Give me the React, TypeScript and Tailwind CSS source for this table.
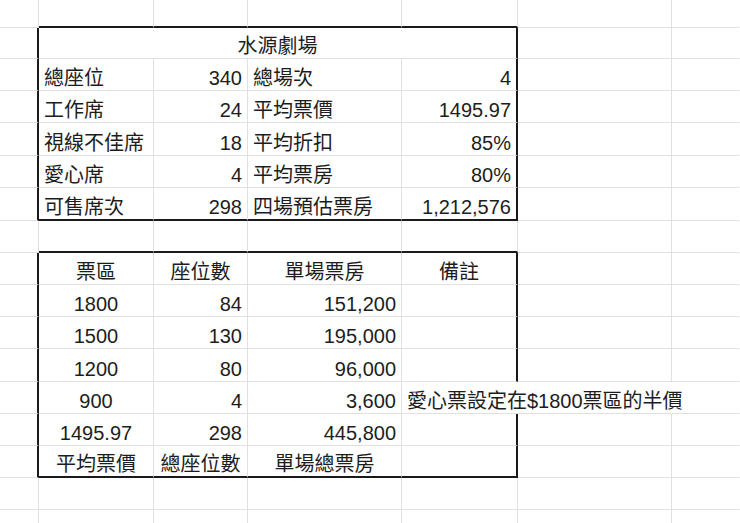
import clsx from 'clsx'

type Line = 'g' | 'k' | 'n'
type Align = 'l' | 'c' | 'r'

interface CellDef {
  t?: string
  a?: Align
  w: string
  r?: Line
  b?: Line
  spill?: boolean
}

interface RowDef {
  h: string
  cells: CellDef[]
}

const RIGHT: Record<Line, string> = {
  g: 'border-r border-r-[#e0e0e0]',
  k: 'border-r-2 border-r-[#1a1a1a]',
  n: 'border-r border-r-transparent',
}

const BOTTOM: Record<Line, string> = {
  g: 'border-b border-b-[#e0e0e0]',
  k: 'border-b-2 border-b-[#1a1a1a]',
  n: 'border-b border-b-transparent',
}

const ALIGN: Record<Align, string> = {
  l: 'justify-start',
  c: 'justify-center',
  r: 'justify-end',
}

// sheet columns A..G
const W = ['w-[39px]', 'w-[115px]', 'w-[94px]', 'w-[154px]', 'w-[116px]', 'w-[154px]', 'flex-1']

type Spec = [string, Align] | null

// one sheet row; `inner` fills columns B..E
function row(
  h: string,
  inner: Spec[],
  opts: { inTable?: boolean; bottom?: Line; spill?: boolean } = {},
): RowDef {
  const { inTable = false, bottom = 'g', spill = false } = opts
  const cells: CellDef[] = [{ w: W[0], r: inTable ? 'k' : 'g' }]
  inner.forEach((s, i) => {
    const last = i === 3
    cells.push({
      w: W[i + 1],
      t: s?.[0],
      a: s?.[1],
      r: last ? (spill ? 'n' : inTable ? 'k' : 'g') : 'g',
      b: bottom,
      spill: last && spill,
    })
  })
  cells.push({ w: W[5], r: spill ? 'n' : 'g' })
  cells.push({ w: W[6], r: 'n' })
  return { h, cells }
}

const empty: Spec[] = [null, null, null, null]

const ROWS: RowDef[] = [
  row('h-[28px]', empty, { bottom: 'k' }),
  {
    h: 'h-[31px]',
    cells: [
      { w: W[0], r: 'k' },
      { w: 'w-[479px]', t: '水源劇場', a: 'c', r: 'k' },
      { w: W[5] },
      { w: W[6], r: 'n' },
    ],
  },
  row('h-[32px]', [['總座位', 'l'], ['340', 'r'], ['總場次', 'l'], ['4', 'r']], { inTable: true }),
  row('h-[32px]', [['工作席', 'l'], ['24', 'r'], ['平均票價', 'l'], ['1495.97', 'r']], { inTable: true }),
  row('h-[33px]', [['視線不佳席', 'l'], ['18', 'r'], ['平均折扣', 'l'], ['85%', 'r']], { inTable: true }),
  row('h-[32px]', [['愛心席', 'l'], ['4', 'r'], ['平均票房', 'l'], ['80%', 'r']], { inTable: true }),
  row('h-[33px]', [['可售席次', 'l'], ['298', 'r'], ['四場預估票房', 'l'], ['1,212,576', 'r']], {
    inTable: true,
    bottom: 'k',
  }),
  row('h-[32px]', empty, { bottom: 'k' }),
  row('h-[32px]', [['票區', 'c'], ['座位數', 'c'], ['單場票房', 'c'], ['備註', 'c']], { inTable: true }),
  row('h-[32px]', [['1800', 'c'], ['84', 'r'], ['151,200', 'r'], null], { inTable: true }),
  row('h-[32px]', [['1500', 'c'], ['130', 'r'], ['195,000', 'r'], null], { inTable: true }),
  row('h-[33px]', [['1200', 'c'], ['80', 'r'], ['96,000', 'r'], null], { inTable: true }),
  row('h-[32px]', [['900', 'c'], ['4', 'r'], ['3,600', 'r'], ['愛心票設定在$1800票區的半價', 'l']], {
    inTable: true,
    spill: true,
  }),
  row('h-[32px]', [['1495.97', 'c'], ['298', 'r'], ['445,800', 'r'], null], { inTable: true }),
  row('h-[32px]', [['平均票價', 'c'], ['總座位數', 'c'], ['單場總票房', 'c'], null], {
    inTable: true,
    bottom: 'k',
  }),
  row('h-[32px]', empty),
  row('h-[32px]', empty),
]

function Cell({ c }: { c: CellDef }) {
  return (
    <div
      className={clsx(
        'flex shrink-0 items-end whitespace-nowrap px-[5px] pb-[2px]',
        c.w,
        RIGHT[c.r ?? 'g'],
        BOTTOM[c.b ?? 'g'],
        ALIGN[c.a ?? 'l'],
        c.spill ? 'overflow-visible' : 'overflow-hidden',
      )}
    >
      {c.t}
    </div>
  )
}

export default function App() {
  return (
    <div className="h-[523px] w-full overflow-hidden bg-white font-['Liberation_Sans','Noto_Sans_CJK_TC',sans-serif] text-[20px] leading-none text-[#1d1d1d]">
      {ROWS.map((r, i) => (
        <div key={i} className={clsx('flex', r.h)}>
          {r.cells.map((c, j) => (
            <Cell key={j} c={c} />
          ))}
        </div>
      ))}
    </div>
  )
}
